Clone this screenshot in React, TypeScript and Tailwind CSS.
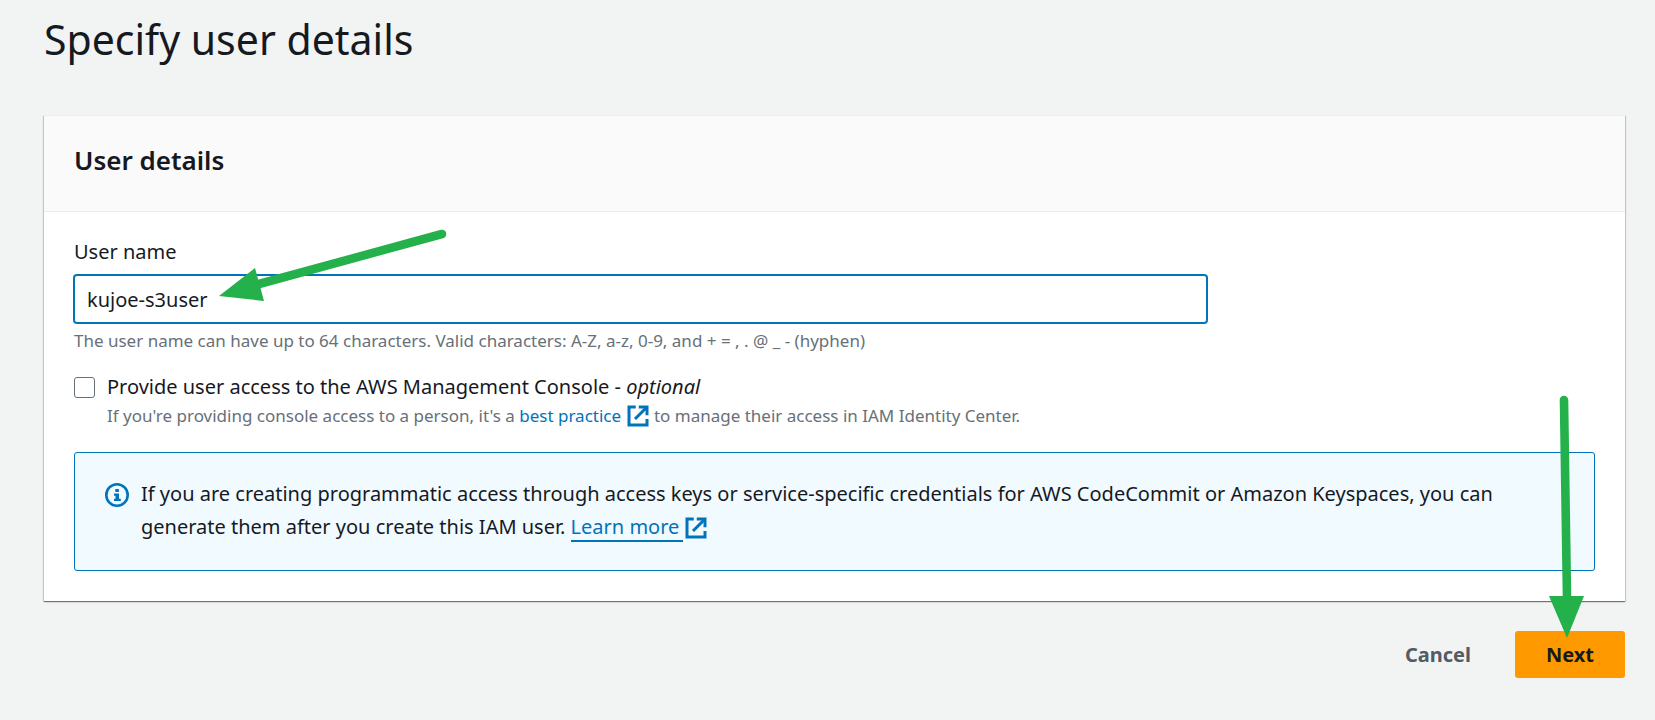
import { useState } from "react";

function ExternalIcon() {
  return (
    <svg
      viewBox="0 0 16 16"
      fill="none"
      stroke="currentColor"
      strokeWidth="2"
      className="inline-block size-6 align-[-6px]"
      aria-hidden="true"
    >
      <path d="M6.5 2H2v12h12v-4" />
      <path d="M8.5 2H14v5.5" />
      <path d="M6 10 13.5 2.5" />
    </svg>
  );
}

function InfoIcon() {
  return (
    <svg viewBox="0 0 24 24" className="mt-[6px] size-6 shrink-0" aria-hidden="true">
      <circle cx="12" cy="12" r="10.7" fill="none" stroke="#0073bb" strokeWidth="2.6" />
      <path d="M10.3 6h3.6v3h-3.6zM9 10.6h5v5.2h1.8V18H9v-2.2h1.5v-3H9z" fill="#0073bb" />
    </svg>
  );
}

export default function App() {
  const [userName, setUserName] = useState("kujoe-s3user");
  const [consoleAccess, setConsoleAccess] = useState(false);

  return (
    <main className="min-h-screen bg-[#f2f3f3] pt-3 pr-[30px] pb-10 pl-11 font-['Noto_Sans',sans-serif] text-[20px] text-[#16191f]">
      <h1 className="text-[41px] leading-[55px]">Specify user details</h1>

      <section className="mt-12 bg-white shadow-[0_1px_1px_0_rgba(0,28,36,0.4),1px_1px_1px_0_rgba(0,28,36,0.15),-1px_1px_1px_0_rgba(0,28,36,0.15)]">
        <header className="border-y border-[#eaeded] bg-[#fafafa] px-[30px] pt-[26px] pb-[33px]">
          <h2 className="text-[26px] leading-9 font-semibold">User details</h2>
        </header>

        <div className="px-[30px] pt-6 pb-[30px]">
          <div className="relative">
            <label htmlFor="user-name" className="block leading-8">
              User name
            </label>
            <div className="mt-[7px] w-3/4 pr-2">
              <input
                id="user-name"
                type="text"
                value={userName}
                onChange={(e) => setUserName(e.target.value)}
                className="block h-12 w-full rounded-[3px] border border-[#0073bb] bg-white px-3 shadow-[0_0_0_1px_#0073bb] outline-none"
              />
            </div>
            <svg
              viewBox="0 0 240 80"
              className="pointer-events-none absolute -top-2 left-[140px] h-20 w-60"
              aria-hidden="true"
            >
              <path d="M228 6 45 56" stroke="#24b04b" strokeWidth="8.6" strokeLinecap="round" />
              <path d="M5 68 41 40 50 73z" fill="#24b04b" />
            </svg>
          </div>
          <p className="mt-1 text-[17px] leading-7 text-[#687078]">
            The user name can have up to 64 characters. Valid characters: A-Z, a-z, 0-9, and + = , . @ _ - (hyphen)
          </p>

          <div className="mt-4 flex gap-3">
            <input
              id="console-access"
              type="checkbox"
              checked={consoleAccess}
              onChange={(e) => setConsoleAccess(e.target.checked)}
              className="mt-[6px] size-[21px] shrink-0 appearance-none rounded-[3px] border border-[#687078] bg-white checked:bg-[#0073bb]"
            />
            <div>
              <label htmlFor="console-access" className="block leading-[31px]">
                Provide user access to the AWS Management Console - <em>optional</em>
              </label>
              <p className="text-[17px] leading-7 text-[#687078]">
                If you're providing console access to a person, it's a{" "}
                <a href="#best-practice" className="text-[#0073bb]">
                  best practice <ExternalIcon />
                </a>{" "}
                to manage their access in IAM Identity Center.
              </p>
            </div>
          </div>

          <div className="mt-[22px] flex gap-3 rounded-[3px] border border-[#0073bb] bg-[#f1faff] px-[30px] pt-6 pb-[27px]">
            <InfoIcon />
            <p className="leading-[33px]">
              If you are creating programmatic access through access keys or service-specific credentials for AWS
              CodeCommit or Amazon Keyspaces, you can generate them after you create this IAM user.{" "}
              <a href="#learn-more" className="text-[#0073bb]">
                <span className="mr-px border-b-2 border-[#0073bb] pr-1">Learn more</span>
                <ExternalIcon />
              </a>
            </p>
          </div>
        </div>
      </section>

      <div className="relative mt-[30px] flex justify-end gap-3">
        <button type="button" className="h-[47px] px-8 font-bold text-[#545b64]">
          Cancel
        </button>
        <button type="button" className="h-[47px] rounded-[3px] bg-[#ff9900] px-[31px] font-bold">
          Next
        </button>
        <svg
          viewBox="0 0 40 250"
          className="pointer-events-none absolute right-[38px] bottom-9 h-[250px] w-10"
          aria-hidden="true"
        >
          <path d="M17 8 20 206" stroke="#24b04b" strokeWidth="8.6" strokeLinecap="round" />
          <path d="M2 204h35L20 246z" fill="#24b04b" />
        </svg>
      </div>
    </main>
  );
}
